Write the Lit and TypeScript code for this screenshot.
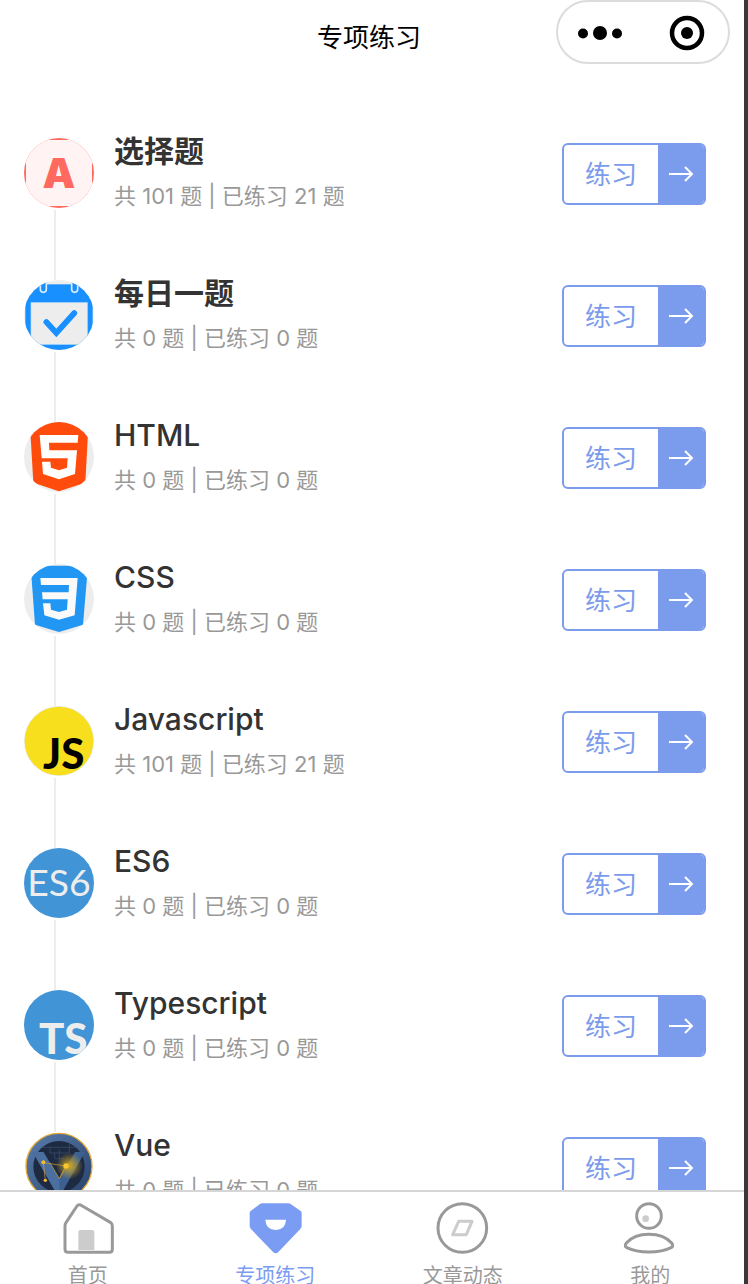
import { LitElement, html, css, svg, TemplateResult } from "lit";
import { customElement, property } from "lit/decorators.js";
import { classMap } from "lit/directives/class-map.js";

interface Topic {
  name: string;
  total: number;
  done: number;
  icon: TemplateResult;
  cjk?: boolean;
}

const choiceIcon = html`<svg viewBox="72 54 210 210" aria-hidden="true">
  <rect x="72" y="54" width="210" height="210" fill="#ff6a60" />
  <rect x="78" y="60" width="198" height="198" rx="4" fill="#fff4f3" />
  <text class="logo-black" x="177" y="204" text-anchor="middle" fill="#ff6a60">A</text>
</svg>`;

const dailyIcon = html`<svg viewBox="42 30 210 210" aria-hidden="true">
  <rect x="42" y="30" width="210" height="210" fill="#ededed" />
  <rect x="46" y="43" width="202" height="210" fill="#1890ff" />
  <rect x="63" y="98" width="169" height="125" fill="#ededed" stroke="#b9dcfb" stroke-width="2" />
  <path d="M91 30v28a9 9 0 0 0 18 0V30M185 30v28a9 9 0 0 0 18 0V30" fill="#1890ff" stroke="#dcebf8" stroke-width="5" />
  <path d="M109 156l30 33 54-60" fill="none" stroke="#1890ff" stroke-width="17" stroke-linecap="round" stroke-linejoin="miter" />
</svg>`;

const htmlIcon = html`<svg viewBox="42 36 210 210" aria-hidden="true">
  <rect x="42" y="36" width="210" height="210" fill="#ededed" />
  <path d="M59 30h177l-10 188-79 26-77-26z" fill="#ff4b0b" />
  <path fill="#fff" d="M89 75h116l-2 23h-86l1 23h83l-6 71-48 16-48-16-3-37h25l2 18 24 8 24-8 2-28H95z" />
</svg>`;

const cssIcon = html`<svg viewBox="42 42 210 210" aria-hidden="true">
  <rect x="42" y="42" width="210" height="210" fill="#ededed" />
  <path d="M62 47h172l-15 177-72 22-72-22z" fill="#2196f3" />
  <path fill="#fafafa" d="M91 84h112l-9 112-47 13-44-13-4-36h22l2 19 24 7 24-7 2-31H98l-2-21h80l1-22H93z" />
</svg>`;

const jsIcon = html`<svg viewBox="42 33 210 210" aria-hidden="true">
  <rect x="42" y="33" width="210" height="210" fill="#e8e8e0" />
  <circle cx="147" cy="138" r="103" fill="#f7df1e" />
  <text class="logo-bold" x="99" y="223" fill="#000">JS</text>
</svg>`;

const esIcon = html`<svg viewBox="42 24 210 210" aria-hidden="true">
  <rect x="42" y="24" width="210" height="210" fill="#4194d6" />
  <text class="logo-thin" x="147" y="168" text-anchor="middle" fill="#ededed">ES6</text>
</svg>`;

const tsIcon = html`<svg viewBox="42 450 210 210" aria-hidden="true">
  <rect x="42" y="450" width="210" height="210" fill="#4194d6" />
  <text class="logo-bold" x="87" y="641" fill="#ededed">TS</text>
</svg>`;

const vueIcon = html`<svg viewBox="42 36 210 210" aria-hidden="true">
  <defs>
    <linearGradient id="rim" x1="0" y1="0" x2="1" y2="1">
      <stop offset="0" stop-color="#5b7fae" />
      <stop offset="1" stop-color="#263f68" />
    </linearGradient>
    <radialGradient id="glow">
      <stop offset="0" stop-color="#d3a722" />
      <stop offset="1" stop-color="#d3a722" stop-opacity="0" />
    </radialGradient>
  </defs>
  <rect x="42" y="36" width="210" height="210" fill="#fff" />
  <circle cx="147" cy="139" r="99" fill="url(#rim)" stroke="#e3aa36" stroke-width="4" />
  <circle cx="147" cy="140" r="77" fill="#1d2a42" />
  <path d="M95 82h104M120 82v17h58V72M148 88v34M134 98v18h28" fill="none" stroke="#40516c" stroke-width="2" />
  <path d="M68 96h32l48 80 47-80h30l-67 118h-22z" fill="#3d6090" />
  <path d="M68 96h32l48 80v38h-12z" fill="#4b6f9f" />
  <path d="M120 128l28 48 28-48" fill="none" stroke="#d0a03c" stroke-width="2" />
  <circle cx="178" cy="138" r="40" fill="url(#glow)" />
  <path d="M106 182l-6-54 67 10-18 36" fill="none" stroke="#dba22f" stroke-width="2" />
  <circle cx="100" cy="127" r="6" fill="#f6bd2b" />
  <circle cx="168" cy="138" r="8" fill="#f9c72d" />
  <circle cx="106" cy="181" r="5" fill="#f6bd2b" />
</svg>`;

const topics: Topic[] = [
  { name: "选择题", total: 101, done: 21, icon: choiceIcon, cjk: true },
  { name: "每日一题", total: 0, done: 0, icon: dailyIcon, cjk: true },
  { name: "HTML", total: 0, done: 0, icon: htmlIcon },
  { name: "CSS", total: 0, done: 0, icon: cssIcon },
  { name: "Javascript", total: 101, done: 21, icon: jsIcon },
  { name: "ES6", total: 0, done: 0, icon: esIcon },
  { name: "Typescript", total: 0, done: 0, icon: tsIcon },
  { name: "Vue", total: 0, done: 0, icon: vueIcon },
];

const tabs = [
  {
    label: "首页",
    box: "144 240 180 168",
    art: svg`<path d="M205 390v-54q0-6 6-6h36q6 0 6 6v54z" fill="#ccc"/>
      <path d="M201 258q4-6 11-3l89 52q6 4 6 11v70q0 9-9 9H174q-9 0-9-9v-71q0-5 3-9z" fill="none" stroke="#999" stroke-width="9"/>`,
  },
  {
    label: "专项练习",
    active: true,
    box: "706 240 180 168",
    art: svg`<path fill="#7b9cf3" fill-rule="evenodd" d="M758 250h78q4 0 8 3l29 20q3 2 3 6v39q0 5-4 9l-66 69q-8 8-16 0l-66-69q-4-4-4-9v-39q0-4 3-6l27-20q4-3 8-3zM767 299q1 30 31 31 30-1 31-31z"/>`,
  },
  {
    label: "文章动态",
    box: "98 240 180 168",
    art: svg`<circle cx="186" cy="324" r="73" fill="none" stroke="#999" stroke-width="9"/>
      <path d="M175 304h40l-17 40h-41z" fill="none" stroke="#ccc" stroke-width="9" stroke-linejoin="round"/>`,
  },
  {
    label: "我的",
    box: "661 240 180 168",
    art: svg`<circle cx="748" cy="288" r="37" fill="none" stroke="#999" stroke-width="9"/>
      <circle cx="738" cy="296" r="10" fill="#ccc"/>
      <path d="M677 377q0-4 3-8 24-26 68-26t68 26q3 4 3 8 0 3-3 5-28 14-68 14t-68-14q-3-2-3-5z" fill="none" stroke="#999" stroke-width="9"/>`,
  },
];

const fontStack = css`Inter, "Noto Sans CJK SC", sans-serif`;

@customElement("topic-item")
export class TopicItem extends LitElement {
  @property({ attribute: false }) topic!: Topic;

  static styles = css`
    :host {
      display: flex;
      font-family: ${fontStack};
    }
    .rail {
      display: flex;
      flex-direction: column;
      width: 70px;
      height: 142px;
      flex: none;
    }
    .avatar {
      width: 70px;
      height: 70px;
      border-radius: 50%;
      overflow: hidden;
    }
    .avatar svg {
      display: block;
      width: 100%;
      height: 100%;
    }
    .logo-thin {
      font: 400 112px Lato, sans-serif;
    }
    .logo-bold {
      font: 900 126px Lato, sans-serif;
    }
    .logo-black {
      font: 900 124px Inter, sans-serif;
    }
    .line {
      flex: 1;
      width: 2px;
      margin: 2px 0 0 30px;
      background: #ededed;
    }
    .info {
      flex: 1;
      min-width: 0;
      margin-left: 20px;
    }
    .name {
      margin: 0 0 16px;
      font-size: 30px;
      line-height: 26px;
      font-weight: 500;
      color: #333;
    }
    .name.cjk {
      font-weight: 700;
    }
    .count {
      margin: 0;
      font-size: 22px;
      line-height: 32px;
      color: #999;
      white-space: nowrap;
    }
    .go {
      display: flex;
      flex: none;
      box-sizing: border-box;
      width: 144px;
      height: 62px;
      margin-top: 5px;
      padding: 0;
      border: 2px solid #7b9bec;
      border-radius: 6px;
      background: #fff;
      color: #7b9bec;
      font-family: inherit;
      font-size: 26px;
      line-height: 60px;
      overflow: hidden;
      cursor: pointer;
    }
    .go-label {
      flex: 1;
    }
    .go-arrow {
      display: grid;
      place-items: center;
      width: 46px;
      height: 58px;
      background: #7b9bec;
    }
    .go-arrow svg {
      width: 26px;
      height: 18px;
    }
  `;

  render() {
    const t = this.topic;
    return html`
      <div class="rail">
        <div class="avatar">${t.icon}</div>
        <div class="line"></div>
      </div>
      <div class="info">
        <h2 class=${classMap({ name: true, cjk: !!t.cjk })}>${t.name}</h2>
        <p class="count">共 ${t.total} 题 | 已练习 ${t.done} 题</p>
      </div>
      <button class="go" type="button">
        <span class="go-label">练习</span>
        <span class="go-arrow">
          <svg viewBox="0 0 26 18" fill="none" stroke="#fff" stroke-width="2" aria-hidden="true">
            <path d="M1 9h23M17 2l7 7-7 7" />
          </svg>
        </span>
      </button>
    `;
  }
}

@customElement("app-root")
export class AppRoot extends LitElement {
  static styles = css`
    :host {
      display: flex;
      flex-direction: column;
      box-sizing: border-box;
      height: 100vh;
      overflow: hidden;
      border-right: 4px solid #36383a;
      background: #fff;
      font-family: ${fontStack};
    }
    .header {
      display: grid;
      grid-template-columns: 1fr auto 1fr;
      align-items: start;
      flex: none;
      margin-left: -6px;
      padding: 0 14px;
    }
    .title {
      grid-column: 2;
      margin: 0;
      font-size: 26px;
      line-height: 76px;
      font-weight: 400;
      color: #000;
    }
    .capsule {
      display: flex;
      justify-self: end;
      border: 2px solid #dcdcdc;
      border-radius: 32px;
    }
    .capsule-btn {
      padding: 0;
      border: 0;
      background: none;
      cursor: pointer;
    }
    .capsule-btn svg {
      display: block;
      width: 85px;
      height: 60px;
    }
    .list {
      flex: 1;
      min-height: 0;
      overflow-y: auto;
      scrollbar-width: none;
      padding: 62px 38px 0 24px;
    }
    .tabs {
      display: grid;
      grid-template-columns: repeat(4, 1fr);
      flex: none;
      box-sizing: border-box;
      height: 94px;
      margin-left: -6px;
      padding-top: 8px;
      border-top: 2px solid #d6d6d6;
    }
    .tab {
      display: flex;
      flex-direction: column;
      align-items: center;
      gap: 10px;
      font-size: 20px;
      line-height: 20px;
      color: #999;
      text-decoration: none;
    }
    .tab.active {
      color: #7b9cf3;
    }
    .tab svg {
      width: 60px;
      height: 56px;
    }
  `;

  render() {
    return html`
      <header class="header">
        <h1 class="title">专项练习</h1>
        <div class="capsule">
          <button class="capsule-btn" type="button" aria-label="更多">
            <svg viewBox="558 2 85 60">
              <circle cx="583" cy="33.500" r="5" />
              <circle cx="600" cy="33" r="7" />
              <circle cx="617" cy="33.500" r="5" />
            </svg>
          </button>
          <button class="capsule-btn" type="button" aria-label="关闭">
            <svg viewBox="643 2 85 60">
              <circle cx="687" cy="33" r="15" fill="none" stroke="#000" stroke-width="4.500" />
              <circle cx="687" cy="33" r="6" />
            </svg>
          </button>
        </div>
      </header>
      <main class="list">
        ${topics.map((t) => html`<topic-item .topic=${t}></topic-item>`)}
      </main>
      <nav class="tabs">
        ${tabs.map(
          (t) => html`<a class=${classMap({ tab: true, active: !!t.active })} href="#">
            <svg viewBox=${t.box} aria-hidden="true">${t.art}</svg>
            <span>${t.label}</span>
          </a>`
        )}
      </nav>
    `;
  }
}
